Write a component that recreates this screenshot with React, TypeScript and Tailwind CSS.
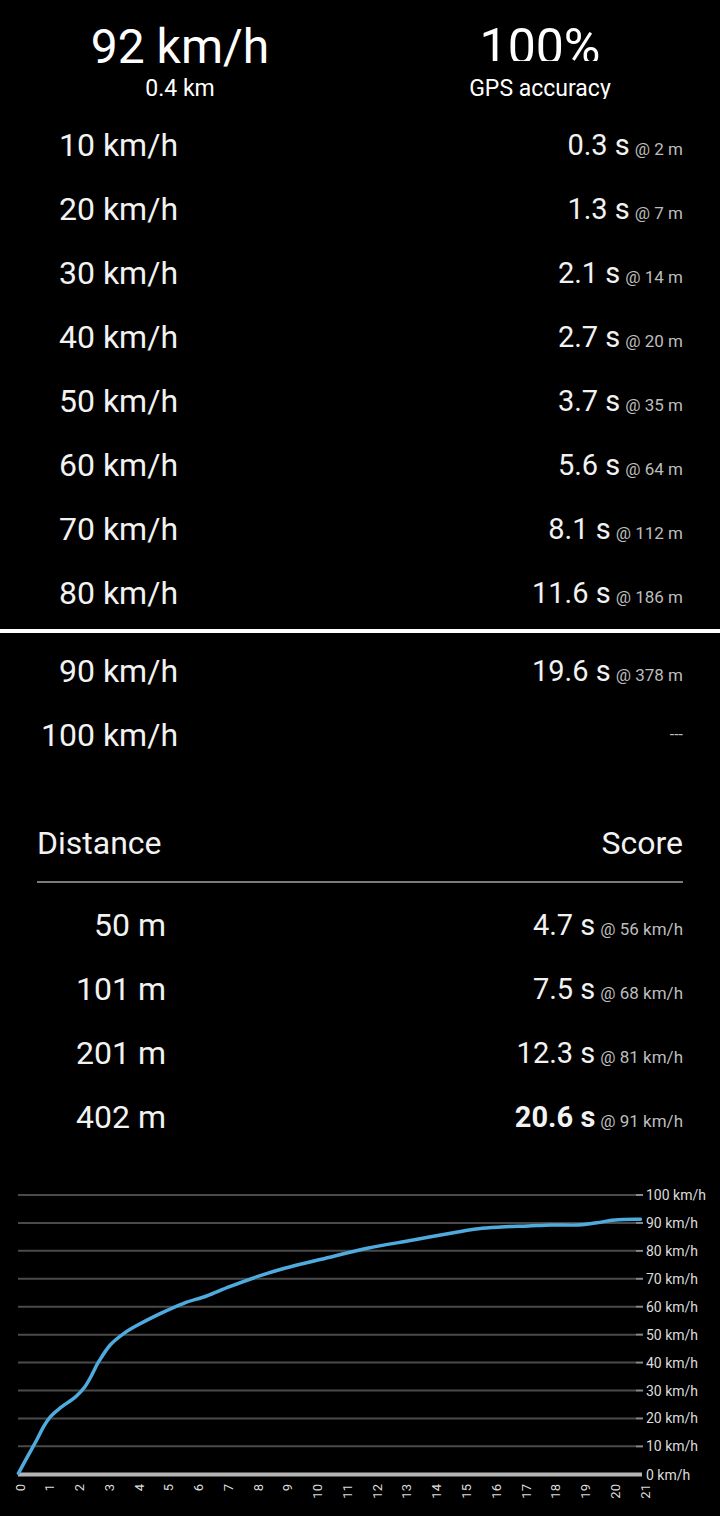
import React from "react";

type Row = { label: string; value?: string; at?: string; bold?: boolean };

const speedRowsA: Row[] = [
  { label: "10 km/h", value: "0.3", at: "2 m" },
  { label: "20 km/h", value: "1.3", at: "7 m" },
  { label: "30 km/h", value: "2.1", at: "14 m" },
  { label: "40 km/h", value: "2.7", at: "20 m" },
  { label: "50 km/h", value: "3.7", at: "35 m" },
  { label: "60 km/h", value: "5.6", at: "64 m" },
  { label: "70 km/h", value: "8.1", at: "112 m" },
  { label: "80 km/h", value: "11.6", at: "186 m" },
];

const speedRowsB: Row[] = [
  { label: "90 km/h", value: "19.6", at: "378 m" },
  { label: "100 km/h" },
];

const distRows: Row[] = [
  { label: "50 m", value: "4.7", at: "56 km/h" },
  { label: "101 m", value: "7.5", at: "68 km/h" },
  { label: "201 m", value: "12.3", at: "81 km/h" },
  { label: "402 m", value: "20.6", at: "91 km/h", bold: true },
];

function ValueCell({ row }: { row: Row }) {
  if (!row.value) {
    return (
      <div className="flex-1 text-right text-[16px] leading-none text-[#bdbdbd]">---</div>
    );
  }
  return (
    <div className="flex-1 text-right text-[29px] leading-none text-[#f2f2f2] whitespace-nowrap">
      <span className={row.bold ? "font-bold" : ""}>{row.value + " s"}</span>
      <span className="ml-[5px] text-[17px] text-[#bdbdbd]">{"@ " + row.at}</span>
    </div>
  );
}

function SpeedRow({ row, w }: { row: Row; w: string }) {
  return (
    <div className="flex h-[64px] items-center">
      <div className={`${w} text-right text-[32px] leading-none text-[#f2f2f2] whitespace-nowrap`}>
        {row.label}
      </div>
      <ValueCell row={row} />
    </div>
  );
}

const pts: [number, number][] = [
  [18.4, 324.3], [27.5, 307.7], [36.7, 291], [43.6, 277.7], [50.5, 267.7],
  [59.7, 259.3], [75.8, 247.7], [84.9, 237.7], [91.8, 226], [98.7, 212.7],
  [110.2, 196], [124, 184.3], [137.7, 176], [160.7, 164.3], [183.7, 154.3],
  [206.6, 147], [229.6, 137.7], [257.1, 127.7], [284.7, 119.3], [321.4, 110.3],
  [367.3, 99.3], [413.2, 91], [459.1, 82.7], [482, 79.3], [505, 77.7],
  [528, 77], [551, 76], [578.5, 76], [597, 73.7], [615.2, 71], [640.5, 70.3],
];

function smoothPath(p: [number, number][]) {
  let d = `M${p[0][0]},${p[0][1]}`;
  for (let i = 0; i < p.length - 1; i++) {
    const p0 = p[i - 1] || p[i];
    const p1 = p[i];
    const p2 = p[i + 1];
    const p3 = p[i + 2] || p2;
    const c1x = p1[0] + (p2[0] - p0[0]) / 6;
    const c1y = p1[1] + (p2[1] - p0[1]) / 6;
    const c2x = p2[0] - (p3[0] - p1[0]) / 6;
    const c2y = p2[1] - (p3[1] - p1[1]) / 6;
    d += ` C${c1x.toFixed(1)},${c1y.toFixed(1)} ${c2x.toFixed(1)},${c2y.toFixed(1)} ${p2[0]},${p2[1]}`;
  }
  return d;
}

function Chart() {
  const yv = (v: number) => 325.3 - v * 2.793;
  const grid = [100, 90, 80, 70, 60, 50, 40, 30, 20, 10];
  const ticks = Array.from({ length: 22 }, (_, i) => i);
  return (
    <svg width="720" height="367" viewBox="0 0 720 367" className="block">
      {grid.map((v) => (
        <g key={v}>
          <line x1={18} y1={yv(v)} x2={636} y2={yv(v)} stroke="#4a4a4a" strokeWidth={2} />
          <line x1={636} y1={yv(v)} x2={643} y2={yv(v)} stroke="#8a8a8a" strokeWidth={2} />
        </g>
      ))}
      <line x1={18} y1={325.5} x2={642} y2={325.5} stroke="#b5b5b5" strokeWidth={4} />
      {[...grid, 0].map((v) => (
        <text
          key={"l" + v}
          x={646}
          y={v === 0 ? 325.5 : yv(v)}
          fontSize={14}
          fill="#dcdcdc"
          dominantBaseline="central"
          fontFamily="Roboto, sans-serif"
        >
          {v + " km/h"}
        </text>
      ))}
      {ticks.map((t) => {
        const x = 20 + t * 29.76 + 4.6;
        return (
          <text
            key={"t" + t}
            x={x}
            y={335}
            fontSize={13}
            fill="#dcdcdc"
            textAnchor="end"
            fontFamily="Roboto, sans-serif"
            transform={`rotate(-90 ${x} 335)`}
          >
            {t}
          </text>
        );
      })}
      <path
        d={smoothPath(pts)}
        fill="none"
        stroke="#4fabdd"
        strokeWidth={3.5}
        strokeLinecap="round"
        strokeLinejoin="round"
      />
    </svg>
  );
}

export default function App() {
  return (
    <div className="w-[720px] h-[1516px] overflow-hidden bg-black text-white font-[Roboto,sans-serif]">
      {/* header */}
      <div className="flex h-[113px]">
        <div className="flex w-[360px] flex-col items-center">
          <div className="mt-[23px] text-[48px] leading-none whitespace-nowrap">92 km/h</div>
          <div className="mt-[6px] text-[23px] leading-none whitespace-nowrap">0.4 km</div>
        </div>
        <div className="flex w-[360px] flex-col items-center">
          <div className="mt-[22px] h-[39px] overflow-hidden text-[50px] leading-none whitespace-nowrap">
            100%
          </div>
          <div className="mt-[16px] h-[22px] overflow-hidden text-[23px] leading-none whitespace-nowrap">
            GPS accuracy
          </div>
        </div>
      </div>

      {/* speed rows part 1 */}
      <div className="px-[37px]">
        {speedRowsA.map((r) => (
          <SpeedRow key={r.label} row={r} w="w-[141px]" />
        ))}
      </div>

      <div className="mt-[4px] h-[4px] bg-white" />

      <div className="mt-[6px] px-[37px]">
        {speedRowsB.map((r) => (
          <SpeedRow key={r.label} row={r} w="w-[141px]" />
        ))}
      </div>

      {/* distance section */}
      <div className="mt-[44px] px-[37px]">
        <div className="flex h-[64px] items-center justify-between text-[32px] leading-none text-[#f2f2f2]">
          <span>Distance</span>
          <span>Score</span>
        </div>
        <div className="mt-[6px] h-[2px] bg-[#7a7a7a]" />
        <div className="mt-[10px]">
          {distRows.map((r) => (
            <SpeedRow key={r.label} row={r} w="w-[129px]" />
          ))}
        </div>
      </div>

      <Chart />
    </div>
  );
}
